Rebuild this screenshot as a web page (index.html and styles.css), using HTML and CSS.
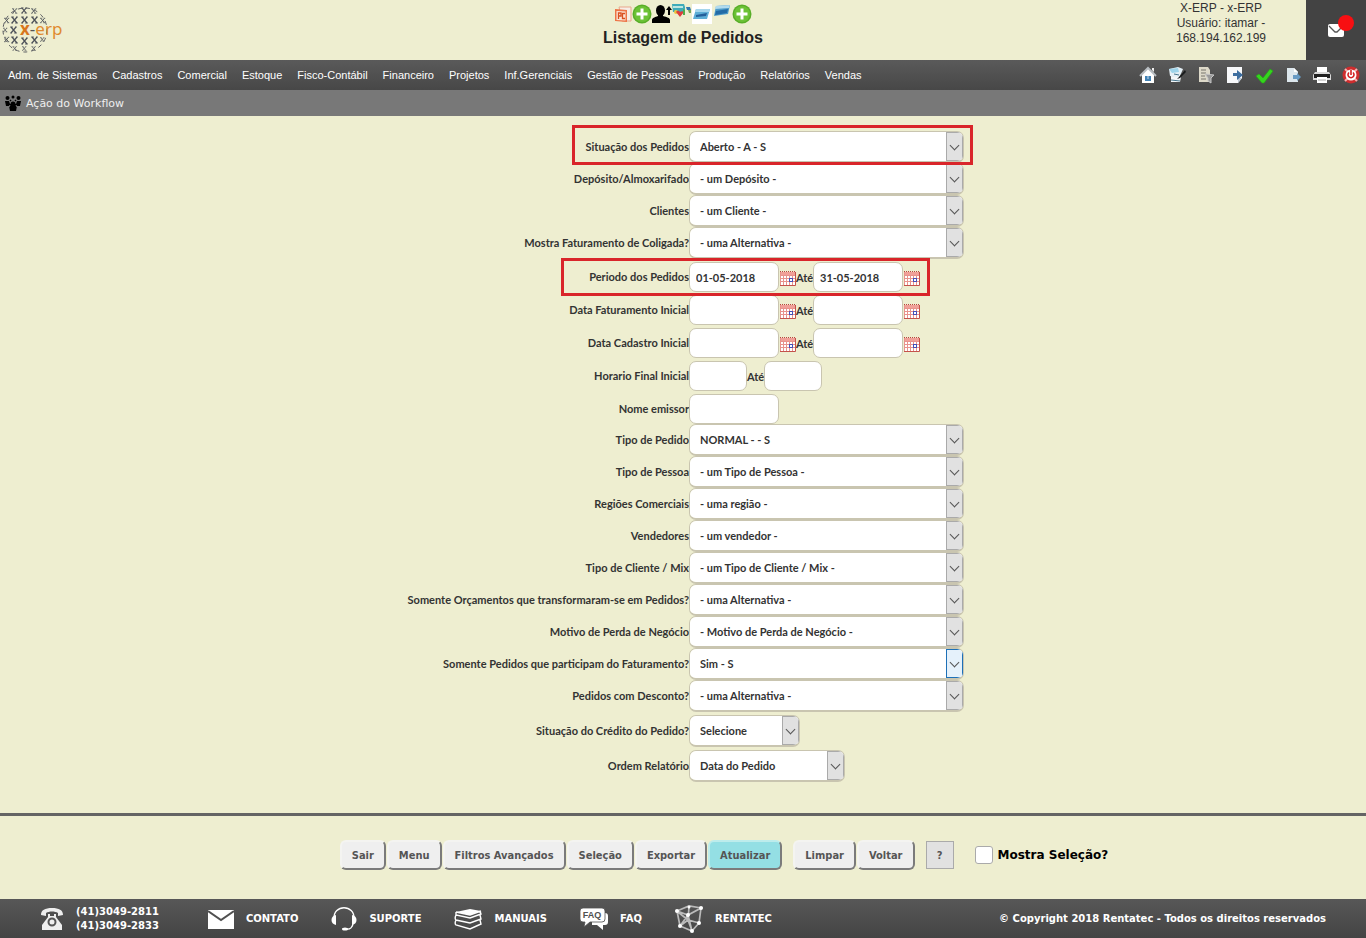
FILE: index.html
```html
<!DOCTYPE html>
<html lang="pt-BR">
<head>
<meta charset="utf-8">
<title>Listagem de Pedidos</title>
<link rel="stylesheet" href="styles.css">
</head>
<body>
<svg class="defs" aria-hidden="true">
  <symbol id="plus" viewBox="0 0 20 20"><circle cx="10" cy="10" r="9.5" fill="#58ae28"/><circle cx="10" cy="10" r="8" fill="#6cc236"/><path d="M10 4.5v11M4.5 10h11" stroke="#fff" stroke-width="3"/></symbol>
  <symbol id="cal" viewBox="0 0 17 17"><path d="M1 2h15v14H1z" fill="#fff"/><path d="M1 2h15v4H1z" fill="#f0a098"/><path d="M1 1.500h16" stroke="#b8463f" stroke-dasharray="1 1"/><path d="M1 5.500h15M1 8.500h15M1 11.500h15M1.500 2v14M4.500 5v11M7.500 5v11M10.500 5v11M13.500 5v11" stroke="#e8938c"/><path d="M1 15.500h15.500V2" fill="none" stroke="#c4524b"/><rect x="10.500" y="8.500" width="3" height="3" fill="#fff" stroke="#4450b8"/></symbol>
  <symbol id="xs" viewBox="0 0 8 8"><path d="M1 1l5 6M6 1L1 7" stroke="#4c5058" stroke-width="1.200"/><path d="M0 1h3M5 1h2M0 7h2M4 7h3" stroke="#4c5058" stroke-width=".8"/></symbol>
</svg>

<header class="top">
  <div class="brand">
    <svg width="64" height="54" viewBox="0 0 64 54" role="img" aria-label="x-erp">
      <g>
        <use href="#xs" x="12" y="8" width="6" height="6"/><use href="#xs" x="21" y="7" width="7" height="7"/><use href="#xs" x="31" y="8" width="6" height="6"/>
        <use href="#xs" x="4" y="17" width="6" height="7"/><use href="#xs" x="11" y="16" width="8" height="8"/><use href="#xs" x="21" y="16" width="8" height="8"/><use href="#xs" x="31" y="16" width="8" height="8"/><use href="#xs" x="40" y="17" width="6" height="7"/>
        <use href="#xs" x="3" y="26" width="5" height="8"/><use href="#xs" x="10" y="26" width="8" height="8"/>
        <use href="#xs" x="4" y="36" width="6" height="7"/><use href="#xs" x="11" y="36" width="8" height="8"/><use href="#xs" x="21" y="37" width="8" height="8"/><use href="#xs" x="31" y="36" width="8" height="8"/><use href="#xs" x="40" y="36" width="5" height="7"/>
        <use href="#xs" x="12" y="46" width="6" height="5"/><use href="#xs" x="21" y="46" width="7" height="5"/><use href="#xs" x="31" y="46" width="6" height="5"/>
        <circle cx="25" cy="30" r="22" fill="none" stroke="#5a5c60" stroke-dasharray="4 4"/>
      </g>
      <text class="logo-text" x="20" y="35"><tspan class="logo-x">x</tspan><tspan class="logo-dash">-</tspan>erp</text>
    </svg>
  </div>
  <div class="heading">
    <div class="heading-icons">
      <svg width="18" height="20" viewBox="0 0 18 20"><path d="M5 3h12v14H8z" fill="#f6eee6" stroke="#e9a78c"/><path d="M1 5l12 1v12l-12-1z" fill="#ed7446"/><path d="M2.500 7l9 .5v9l-9-.5z" fill="#fbe3d6"/><path d="M4.500 15V9H7v3H4.500M11 9.500H8.500v5H11" fill="none" stroke="#d9501f" stroke-width="1.300"/></svg>
      <svg width="20" height="20"><use href="#plus"/></svg>
      <svg width="20" height="20" viewBox="0 0 20 20"><ellipse cx="8.500" cy="6.500" rx="4.500" ry="5.500"/><path d="M0 19v-3c0-2 3-3 6-4V9h5v3c4 1 7 2 7 4v3zM17 2l-3 4h2v5h2V6h2z"/></svg>
      <svg width="20" height="20" viewBox="0 0 20 20"><path d="M0 0h12l1 3v5H1z" fill="#3eabb9"/><path d="M1 2h10v2H1z" fill="#bde5df"/><circle cx="4" cy="8" r="2" fill="#ecc640"/><path d="M4 8c2-2 3-1 4 0 1-1 3-1 4 0l-4 5z" fill="#dc3e3e"/><path d="M11 5l2 1v5h-2z" fill="#50ae4a"/><path d="M14 3h4l1 3h-4z" fill="#2e79af"/><path d="M16 6h3v3h-2z" fill="#77a65b"/></svg>
      <svg width="20" height="20" viewBox="0 0 20 20"><path d="M0 0h20v20H0z" fill="#fff"/><path d="M4 5h14l-3 10H1z" fill="#5eaed6"/><path d="M4 5h14l-1 3H3z" fill="#a5d6ec"/><path d="M4 11l11-2-1 3-10 1z" fill="#245f9a"/></svg>
      <svg width="20" height="20" viewBox="0 0 20 20"><path d="M4 2l14-1-2 9-14 2z" fill="#4c9bc9"/><path d="M4 2l14-1-1 3-14 1z" fill="#b1dbee"/><path d="M4 7l12-2-1 4-12 2z" fill="#236ba6"/></svg>
      <svg width="20" height="20"><use href="#plus"/></svg>
    </div>
    <h1>Listagem de Pedidos</h1>
  </div>
  <div class="user">X-ERP - x-ERP<br>Usuário: itamar -<br>168.194.162.199</div>
  <button class="mail" aria-label="Mensagens"><svg width="36" height="36" viewBox="0 0 36 36"><rect x="10" y="12" width="16" height="13" rx="2" fill="#fff"/><path d="M11 14l6 6h2l6-6" fill="none" stroke="#555" stroke-width="1.300"/><circle cx="28" cy="11" r="8" fill="#f80f12"/></svg></button>
</header>

<nav class="menu">
  <div class="links"><a href="#">Adm. de Sistemas</a><a href="#">Cadastros</a><a href="#">Comercial</a><a href="#">Estoque</a><a href="#">Fisco-Contábil</a><a href="#">Financeiro</a><a href="#">Projetos</a><a href="#">Inf.Gerenciais</a><a href="#">Gestão de Pessoas</a><a href="#">Produção</a><a href="#">Relatórios</a><a href="#">Vendas</a></div>
  <div class="tools">
    <button aria-label="Início"><svg viewBox="0 0 18 18"><path d="M3 8v9h12V8L9 2z" fill="#fff"/><path d="M1 10l8-8 8 8" fill="none" stroke="#b9bec3" stroke-width="2"/><path d="M13 2h2v4l-2-2z" fill="#eee"/><path d="M6 10h6v5H6z" fill="#4383b5"/><path d="M9 10v3" stroke="#cde"/></svg></button>
    <button aria-label="Editar"><svg viewBox="0 0 18 18"><path d="M1 3l9-2 5 2-4 9-9-2z" fill="#e4eff5"/><path d="M1 3l9-1 1 4-7 1z" fill="#9ed4ea"/><path d="M3 16h9l1-5-10-1z" fill="#f3f6f8"/><path d="M3 14l9 1M6 8l5 1" stroke="#49778e"/><path d="M17 4l-6 7-2 2 3-1 6-6z" fill="#191b1c"/></svg></button>
    <button aria-label="Relatório"><svg viewBox="0 0 18 18"><path d="M2 1h9l2 3v12H2z" fill="#ddd9c9"/><path d="M4 4h5M4 7h5M4 10h4M4 13h5" stroke="#77756c"/><path d="M8 8l9 1-3 3v5l-3-2v-3z" fill="#999" stroke="#c5c5c5"/></svg></button>
    <button aria-label="Exportar página"><svg viewBox="0 0 18 18"><path d="M1 1h15v11l-4 5H1z" fill="#f7f8fa"/><path d="M16 12l-4 5v-5z" fill="#bcc6d3"/><path d="M7 7h4V4l6 5-6 5v-4H7z" fill="#3d6d9f"/></svg></button>
    <button aria-label="Confirmar"><svg viewBox="0 0 18 18"><path d="M1 10l3-2 4 4 7-9 3 2-9 12H7z" fill="#35d51e" stroke="#20a911" stroke-width=".6"/></svg></button>
    <button aria-label="Documento"><svg viewBox="0 0 18 18"><path d="M3 2h7l4 4v10H3z" fill="#dce6ec"/><path d="M10 2v4h4z" fill="#fff"/><path d="M9 9h4V7l4 4-4 4v-2H9z" fill="#699bc4"/></svg></button>
    <button aria-label="Imprimir"><svg viewBox="0 0 18 18"><path d="M4 1h10v6H4z" fill="#fff"/><path d="M2 6h14l2 3v5H0V9z" fill="#d9d9d9"/><path d="M1 8h16v4H1z" fill="#202020"/><path d="M4 11h10v6H4z" fill="#fff"/><path d="M5 14h8" stroke="#aaa"/></svg></button>
    <button aria-label="Sair do sistema"><svg viewBox="0 0 18 18"><circle cx="9" cy="9" r="8.500" fill="#cf2d2e"/><path d="M3 3l3 3M15 3l-3 3M3 15l3-3M15 15l-3-3" stroke="#f5b0b0" stroke-width="2"/><circle cx="9" cy="9" r="5.500" fill="#fff"/><path d="M7 6.500a3 3 0 1 0 4 0M9 4v5" fill="none" stroke="#d42022" stroke-width="1.600"/></svg></button>
  </div>
</nav>
<div class="workflow"><svg width="16" height="16" viewBox="0 0 16 16"><circle cx="2.500" cy="3" r="2"/><circle cx="8" cy="2" r="1.500"/><circle cx="13.500" cy="3" r="2"/><path d="M0 6h4l1 3h6l1-3h4l-1 5h-3l-1 5H5l-1-5H1z"/><circle cx="8" cy="9" r="2.500"/><path d="M5 5l1 1M11 5l-1 1" stroke="#000" stroke-width="1.500"/><path d="M4 12l1-2M12 12l-1-2" stroke="#787878"/></svg><span>Ação do Workflow</span></div>

<main>
<form class="filters">
  <div class="row marked marked-first"><label for="f1">Situação dos Pedidos</label><div class="pick"><select id="f1"><option>Aberto - A - S</option></select></div></div>
  <div class="row"><label for="f2">Depósito/Almoxarifado</label><div class="pick"><select id="f2"><option>- um Depósito -</option></select></div></div>
  <div class="row"><label for="f3">Clientes</label><div class="pick"><select id="f3"><option>- um Cliente -</option></select></div></div>
  <div class="row"><label for="f4">Mostra Faturamento de Coligada?</label><div class="pick"><select id="f4"><option>- uma Alternativa -</option></select></div></div>
  <div class="row short marked marked-dates"><label for="d1">Periodo dos Pedidos</label><div class="fields"><input id="d1" type="text" value="01-05-2018"><button type="button" class="cal" aria-label="Calendário"><svg width="17" height="17"><use href="#cal"/></svg></button><label for="d2">Até</label><input id="d2" type="text" value="31-05-2018"><button type="button" class="cal" aria-label="Calendário"><svg width="17" height="17"><use href="#cal"/></svg></button></div></div>
  <div class="row short"><label for="d3">Data Faturamento Inicial</label><div class="fields"><input id="d3" type="text"><button type="button" class="cal" aria-label="Calendário"><svg width="17" height="17"><use href="#cal"/></svg></button><label for="d4">Até</label><input id="d4" type="text"><button type="button" class="cal" aria-label="Calendário"><svg width="17" height="17"><use href="#cal"/></svg></button></div></div>
  <div class="row short"><label for="d5">Data Cadastro Inicial</label><div class="fields"><input id="d5" type="text"><button type="button" class="cal" aria-label="Calendário"><svg width="17" height="17"><use href="#cal"/></svg></button><label for="d6">Até</label><input id="d6" type="text"><button type="button" class="cal" aria-label="Calendário"><svg width="17" height="17"><use href="#cal"/></svg></button></div></div>
  <div class="row short hours"><label for="h1">Horario Final Inicial</label><div class="fields"><input id="h1" type="text"><label for="h2">Até</label><input id="h2" type="text"></div></div>
  <div class="row short"><label for="n1">Nome emissor</label><div class="fields"><input id="n1" type="text"></div></div>
  <div class="row"><label for="f5">Tipo de Pedido</label><div class="pick"><select id="f5"><option>NORMAL - - S</option></select></div></div>
  <div class="row"><label for="f6">Tipo de Pessoa</label><div class="pick"><select id="f6"><option>- um Tipo de Pessoa -</option></select></div></div>
  <div class="row"><label for="f7">Regiões Comerciais</label><div class="pick"><select id="f7"><option>- uma região -</option></select></div></div>
  <div class="row"><label for="f8">Vendedores</label><div class="pick"><select id="f8"><option>- um vendedor -</option></select></div></div>
  <div class="row"><label for="f9">Tipo de Cliente / Mix</label><div class="pick"><select id="f9"><option>- um Tipo de Cliente / Mix -</option></select></div></div>
  <div class="row"><label for="f10">Somente Orçamentos que transformaram-se em Pedidos?</label><div class="pick"><select id="f10"><option>- uma Alternativa -</option></select></div></div>
  <div class="row"><label for="f11">Motivo de Perda de Negócio</label><div class="pick"><select id="f11"><option>- Motivo de Perda de Negócio -</option></select></div></div>
  <div class="row"><label for="f12">Somente Pedidos que participam do Faturamento?</label><div class="pick hot"><select id="f12"><option>Sim - S</option></select></div></div>
  <div class="row"><label for="f13">Pedidos com Desconto?</label><div class="pick"><select id="f13"><option>- uma Alternativa -</option></select></div></div>
  <div class="row spaced"><label for="f14">Situação do Crédito do Pedido?</label><div class="pick small"><select id="f14"><option>Selecione</option></select></div></div>
  <div class="row spaced"><label for="f15">Ordem Relatório</label><div class="pick medium"><select id="f15"><option>Data do Pedido</option></select></div></div>
</form>
<div class="actions">
  <div class="group"><button>Sair</button><button>Menu</button><button>Filtros Avançados</button><button>Seleção</button><button>Exportar</button><button class="primary">Atualizar</button></div>
  <div class="group"><button>Limpar</button><button>Voltar</button></div>
  <button class="help">?</button>
  <label class="check"><input type="checkbox">Mostra Seleção?</label>
</div>
</main>

<footer>
  <div class="contacts">
    <span class="phone"><svg width="24" height="24" viewBox="0 0 24 24"><path d="M1 8C1 3 5 1 12 1s11 2 11 7l-5 1V6c-3-2-9-2-12 0v3z" fill="#eee"/><path d="M8 7h2v2h4V7h2v3l6 8v5H2v-5l6-8z" fill="#eee"/><circle cx="12" cy="15" r="3.500" fill="none" stroke="#555" stroke-width="2"/></svg><span>(41)3049-2811<br>(41)3049-2833</span></span>
    <a href="#"><svg width="26" height="26" viewBox="0 0 26 26"><path d="M0 4h26v19H0z" fill="#fff"/><path d="M0 5l13 9 13-9" fill="none" stroke="#505050" stroke-width="2"/></svg>CONTATO</a>
    <a href="#"><svg width="26" height="26" viewBox="0 0 26 26"><path d="M3 13C2-2 24-2 23 13M22 17c0 4-3 7-7 6" fill="none" stroke="#fff" stroke-width="1.300"/><path d="M5 9v10c-6-1-6-9 0-10zM21 9v10c6-1 6-9 0-10z" fill="#fff"/><ellipse cx="14" cy="23" rx="3" ry="1.500" fill="#fff"/></svg>SUPORTE</a>
    <a href="#"><svg width="28" height="26" viewBox="0 0 28 26"><path d="M2 6l14-3 11 2-11 4z" fill="#fff"/><path d="M2 6v3l14 3 11-4-1-3M2 9c-1 2-1 4 0 5l14 3 11-4-1-4M2 14c-1 2-1 4 0 5l14 4 11-5-1-4M2 6l14 3 11-4" fill="none" stroke="#fff" stroke-width="1.400"/></svg>MANUAIS</a>
    <a href="#"><svg width="28" height="26" viewBox="0 0 28 26"><path d="M25 7q3 0 3 3v6q0 3-3 3h-2v5l-6-5h-5v-3h10q3 0 3-3z" fill="#fff"/><path d="M3 2h19q3 0 3 3v8q0 3-3 3H10l-6 5 1-5H3q-3 0-3-3V5q0-3 3-3z" fill="#fff" stroke="#505050" stroke-width=".8"/><text class="faq-text" x="12" y="12">FAQ</text></svg>FAQ</a>
    <a href="#"><svg width="28" height="28" viewBox="0 0 28 28"><path d="M2 6l11 4 13-7-12-2zM2 6l3 15 12 5-4-16M17 26l7-8 2-15M5 21l8-6 11 3M13 15l1-13M5 21l8-11M17 26l-4-11M3 7l10 8" fill="none" stroke="#bbb" stroke-width="1.700"/><g fill="#fff"><circle cx="2" cy="6" r="2"/><circle cx="13" cy="10" r="2"/><circle cx="26" cy="3" r="2"/><circle cx="14" cy="2" r="1.500"/><circle cx="5" cy="21" r="2"/><circle cx="17" cy="26" r="2"/><circle cx="24" cy="18" r="2"/></g></svg>RENTATEC</a>
  </div>
  <div class="copyright">© Copyright 2018 Rentatec - Todos os direitos reservados</div>
</footer>
</body>
</html>
```
FILE: styles.css
```css
*, *::before, *::after { box-sizing: border-box; }
body {
  margin: 0;
  min-height: 100vh;
  display: flex;
  flex-direction: column;
  background: #eeeed0;
  color: #333;
  font-family: "Liberation Sans", Arial, sans-serif;
}
svg { display: block; flex: none; }
button { margin: 0; padding: 0; border: 0; background: none; font: inherit; color: inherit; cursor: pointer; }
a { color: inherit; text-decoration: none; }
.defs { width: 0; height: 0; position: absolute; }

.top { display: grid; grid-template-columns: 1fr auto 1fr auto; min-height: 60px; }
.brand { display: flex; }
.logo-text { font: 17px "Noto Sans", sans-serif; fill: #e08a2e; }
.logo-x { font-weight: 700; fill: #d8761c; }
.logo-dash { fill: #555; }
.heading { margin-left: 60px; text-align: center; }
.heading-icons { display: flex; justify-content: center; padding-top: 4px; }
h1 { margin: 5px 0 0; font-size: 16px; line-height: 18px; color: #222; }
.user { justify-self: end; width: 170px; padding-top: 1px; font-size: 12px; line-height: 15px; text-align: center; }
.mail { width: 60px; display: flex; align-items: center; justify-content: center; background: #434343; }

.menu { display: flex; justify-content: space-between; align-items: center; min-height: 30px; padding: 0 6px 0 8px; background: linear-gradient(#5a5a5a, #474747); color: #fff; font-size: 11px; }
.links { display: flex; gap: 15px; }
.tools { display: flex; gap: 11px; }
.tools svg { width: 18px; height: 18px; }
.workflow { display: flex; align-items: center; gap: 5px; height: 26px; padding-left: 5px; background: #787878; color: #eee; font: 11px "DejaVu Sans", Verdana, sans-serif; }

main { flex: 1; }
.filters { padding: 15px 0 31px; border-bottom: 3px solid #646464; font: bold 11px Lato, Calibri, sans-serif; }
.row { position: relative; display: grid; grid-template-columns: calc(50% + 6px) 1fr; align-items: center; min-height: 32px; }
.row > label { padding-bottom: 2px; text-align: right; }
.short { min-height: 33px; padding-top: 3px; }
.spaced { margin-top: 3px; }
.marked::after { content: ""; position: absolute; z-index: 2; border: 3px solid #d9252a; pointer-events: none; }
.marked-first::after { left: calc(50% - 111px); top: -6px; width: 401px; height: 40px; }
.marked-dates::after { left: calc(50% - 122px); top: -1px; width: 369px; height: 38px; }
.pick { position: relative; width: 275px; height: 32px; border: 1px solid #c9c5b0; border-bottom-width: 2px; border-radius: 7px; background: #fff; overflow: hidden; }
.small { width: 111px; }
.medium { width: 156px; }
.pick select { display: block; width: 100%; height: 100%; padding: 0 20px 0 10px; border: 0; appearance: none; background: #fff; font: inherit; color: #333; }
.pick::after { content: ""; position: absolute; right: 0; top: 0; width: 17px; height: 100%; border: 1px solid #aaa; background: #e1e1e1; pointer-events: none; }
.pick::before { content: ""; position: absolute; z-index: 1; right: 5px; top: 10px; width: 7px; height: 7px; border: solid #555; border-width: 0 1px 1px 0; transform: rotate(45deg); pointer-events: none; }
.hot::after { border-color: #1d70b7; background: #e5f1fb; }
.fields { display: flex; align-items: center; }
.fields input { width: 90px; height: 30px; padding: 0 6px; border: 1px solid #c9c5b0; border-radius: 7px; background: #fff; font: inherit; color: #333; }
.cal { padding-top: 3px; }
.fields label { width: 17px; display: flex; justify-content: center; }
.hours .fields input { width: 58px; }

.actions { display: flex; align-items: center; justify-content: center; gap: 11px; padding: 24px 0 29px; margin-left: 82px; font: bold 11px "DejaVu Sans Condensed", "DejaVu Sans", Tahoma, sans-serif; color: #555; }
.group { display: flex; gap: 1px; }
.group button { height: 30px; padding: 0 10px; border: 2px solid; border-color: #f4f4f1 #7b7b7b #7b7b7b #f4f4f1; border-radius: 6px; background: #efefef; }
.group .primary { background: #94dfe4; border-color: #bdecec #7b7b7b #7b7b7b #bdecec; }
.help { width: 28px; height: 28px; border: 1px solid #aaa; background: #e1e1e1; }
.group + .help { flex: none; }
.check { display: flex; align-items: center; gap: 5px; margin-left: 10px; color: #000; font: bold 12px "DejaVu Sans", Verdana, sans-serif; }
.check input { width: 18px; height: 18px; margin: 0; appearance: none; border: 1px solid #aaa; border-radius: 3px; background: #fff; }

footer { display: flex; align-items: center; justify-content: space-between; min-height: 39px; padding: 0 40px; background: linear-gradient(#575757, #444); color: #fff; font: bold 10px "DejaVu Sans", Verdana, sans-serif; }
.contacts { display: flex; align-items: center; gap: 33px; }
.contacts a, .phone { display: flex; align-items: center; gap: 12px; }
.phone { line-height: 14px; margin-right: 16px; }
.faq-text { font: bold 9px "Liberation Sans", sans-serif; fill: #505050; text-anchor: middle; }
```
